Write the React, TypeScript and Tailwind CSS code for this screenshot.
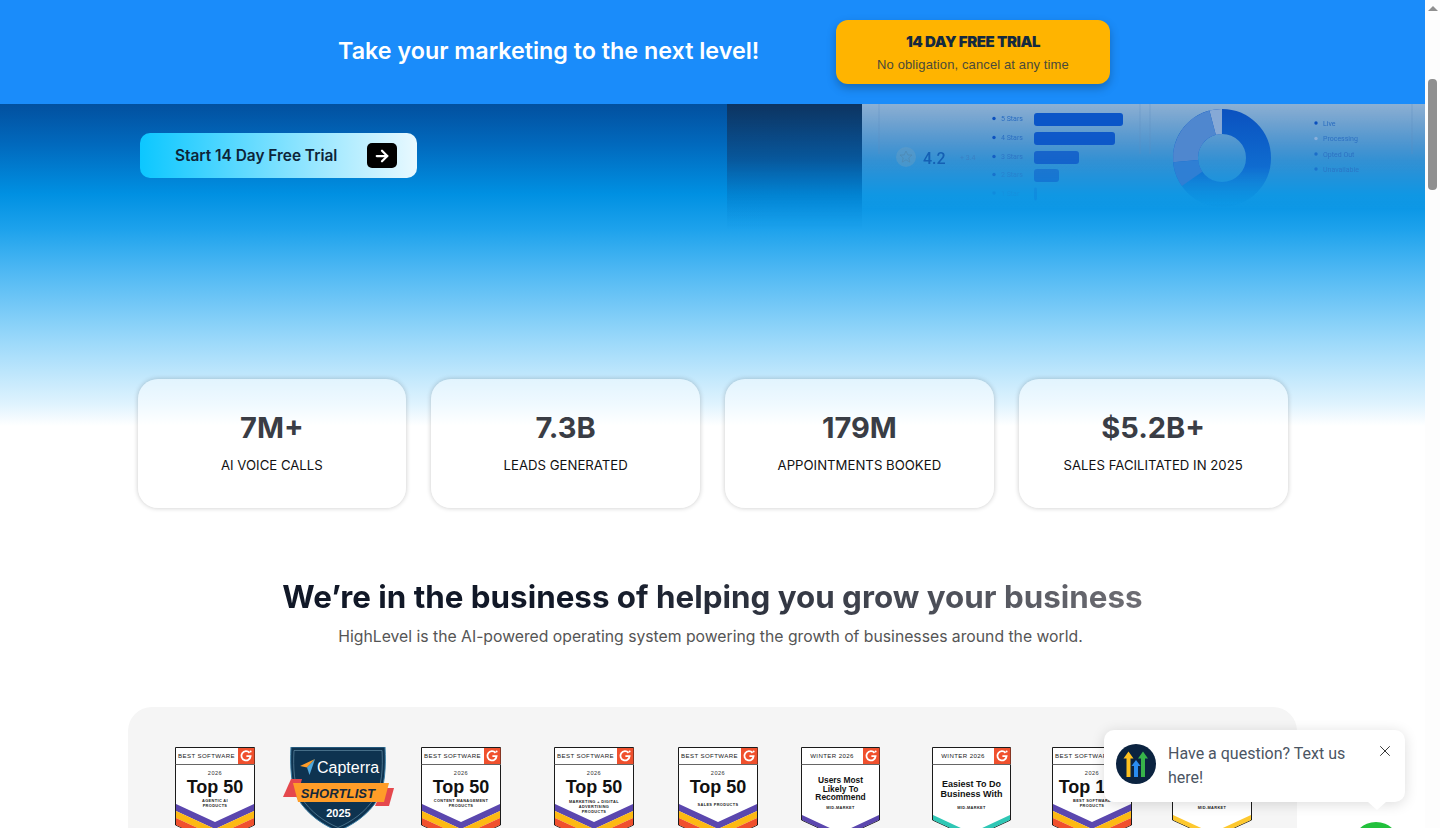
import React from "react";
import { ArrowRight, X } from "lucide-react";

const SANS = "font-['Inter','Liberation_Sans',sans-serif]";

type BadgeProps = {
  head?: string;
  year?: string;
  title?: string[];
  titleSize?: number;
  titleY?: number;
  titleGap?: number;
  sub: string[];
  subY?: number;
  stripes: string[];
  width?: number;
  start?: number;
  thick?: number;
};

function G2Badge({ head, year, title = [], titleSize = 18, titleY = 46, titleGap = 8.7, sub, subY, stripes, width = 80, start = 57, thick = 7 }: BadgeProps) {
  const w = width;
  const c = w / 2;
  const headW = w - 17;
  const drop = 18;
  const fs = "'Liberation Sans', Arial, sans-serif";
  const end = start + stripes.length * thick;
  return (
    <svg width={w} height={81} viewBox={`0 0 ${w} 81`} className="block shrink-0">
      <path d={`M.5.5H${w - 0.5}V${end}L${c} ${end + drop}L.5 ${end}Z`} fill="#fff" stroke="#1b1b1b" />
      {stripes.map((color, i) => (
        <path
          key={color + i}
          d={`M1 ${start + i * thick}L${c} ${start + drop + i * thick}L${w - 1} ${start + i * thick}V${start + (i + 1) * thick}L${c} ${start + drop + (i + 1) * thick}L1 ${start + (i + 1) * thick}Z`}
          fill={color}
        />
      ))}
      <path d={`M.5 17.5H${w}`} stroke="#666" />
      <rect x={headW} y={1} width={16.5} height={16} fill="#f0502d" />
      <path d={`M${headW + 11.5} 5.8A4.6 4.6 0 1 0 ${headW + 12.6} 9.2H${headW + 8.4}`} fill="none" stroke="#fff" strokeWidth={1.8} />
      <circle cx={headW + 12.6} cy={4.6} r={1} fill="#fff" />
      {head && <text x={headW / 2} y={11.4} fontSize={6.1} letterSpacing={0.4} fontWeight={500} fill="#222" textAnchor="middle" fontFamily={fs}>{head}</text>}
      {year && <text x={c} y={27.5} fontSize={5.6} letterSpacing={0.5} fill="#333" textAnchor="middle" fontFamily={fs}>{year}</text>}
      {title.map((t, i) => (
        <text key={t} x={c} y={titleY + i * titleGap} fontSize={titleSize} fontWeight={700} fill="#111" textAnchor="middle" fontFamily={fs}>{t}</text>
      ))}
      {sub.map((t, i) => (
        <text key={t} x={c} y={(subY ?? 56) + i * 5} fontSize={3.9} fontWeight={700} letterSpacing={0.35} fill="#222" textAnchor="middle" fontFamily={fs}>{t}</text>
      ))}
    </svg>
  );
}

function Capterra() {
  const fs = "'Liberation Sans', Arial, sans-serif";
  return (
    <svg width={111} height={81} viewBox="0 0 111 81" className="block shrink-0">
      <path d="M8 0H102C103 20 102 40 95 52C85 68 70 78 55 84C40 78 25 68 15 52C8 40 7 20 8 0Z" fill="#0e3350" stroke="#3b7ea5" />
      <path d="M11 3.5H99C100 21 99 39 92 50C83 65 68 75 55 80.5C42 75 27 65 18 50C11 39 10 21 11 3.5Z" fill="none" stroke="#6d97ae" strokeWidth={0.6} />
      <path d="M17 19L32 12L24 20.5Z" fill="#ff9d28" />
      <path d="M32 12L24 20.5L26.5 28Z" fill="#51a8dc" />
      <text x={34} y={26} fontSize={16} fontWeight={500} fill="#fff" fontFamily={fs}>Capterra</text>
      <path d="M8 32H19L14 50H0Z" fill="#e5484d" />
      <path d="M100 41H111L106 59H92Z" fill="#e5484d" />
      <path d="M10 36H106L101 55H15Z" fill="#ff9d28" />
      <text x={55} y={50.5} fontSize={13} fontWeight={700} fontStyle="italic" letterSpacing={0.1} fill="#14283a" textAnchor="middle" fontFamily={fs}>SHORTLIST</text>
      <text x={55.5} y={69.5} fontSize={11} fontWeight={700} fill="#fff" textAnchor="middle" fontFamily={fs}>2025</text>
    </svg>
  );
}

function HeroPicture() {
  const fs = "Roboto, sans-serif";
  return (
    <svg width={698} height={125} viewBox="0 0 698 125" className="absolute top-0 right-0 blur-[0.4px]">
      <defs>
        <linearGradient id="fadeDark" x1="0" y1="0" x2="0" y2="1">
          <stop offset="0" stopColor="#0d3460" />
          <stop offset="0.45" stopColor="#0a4f8e" stopOpacity={0.75} />
          <stop offset="1" stopColor="#0089dd" stopOpacity={0} />
        </linearGradient>
        <linearGradient id="fadeLight" x1="0" y1="0" x2="0" y2="1">
          <stop offset="0" stopColor="#ffffff" stopOpacity={0.55} />
          <stop offset="0.45" stopColor="#ffffff" stopOpacity={0.2} />
          <stop offset="0.85" stopColor="#ffffff" stopOpacity={0} />
        </linearGradient>
        <linearGradient id="fadeInk" x1="0" y1="0" x2="0" y2="105" gradientUnits="userSpaceOnUse">
          <stop offset="0" stopColor="#0a4fbe" />
          <stop offset="0.6" stopColor="#0f6cd0" />
          <stop offset="1" stopColor="#0090e0" stopOpacity={0} />
        </linearGradient>
      </defs>
      <rect x={0} y={0} width={135} height={125} fill="url(#fadeDark)" />
      <rect x={135} y={0} width={563} height={125} fill="url(#fadeLight)" />
      <g stroke="#5f8fbf" strokeOpacity={0.4}>
        <path d="M152 0V50" />
        <path d="M413 0V50" />
        <path d="M423 0V50" />
        <path d="M685 0V50" />
      </g>
      <circle cx={179} cy={53} r={10} fill="#6f9fc0" opacity={0.4} />
      <path d="M179 47l1.9 4h4.1l-3.2 2.9 1 4.2-3.8-2.3-3.8 2.3 1-4.2-3.2-2.9h4.1z" fill="none" stroke="#4e88b0" strokeWidth={0.7} />
      <text x={196} y={60} fontSize={16} fontWeight={500} fill="#1460b4" fontFamily={fs}>4.2</text>
      <text x={233} y={56} fontSize={7} fill="#3a80c4" fontFamily={fs}>+ 3.4</text>
      {[
        ["5 Stars", 15.5, 89, 1],
        ["4 Stars", 34.5, 81, 0.95],
        ["3 Stars", 53.5, 45, 0.75],
        ["2 Stars", 71.5, 25, 0.45],
        ["1 Star", 90, 3, 0.15],
      ].map(([label, y, w, op]) => (
        <g key={label as string} opacity={op as number}>
          <circle cx={267} cy={(y as number) - 1} r={1.7} fill="#0a4fbe" />
          <text x={274} y={(y as number) + 1.5} fontSize={7} fill="#2a6cc0" fontFamily={fs}>{label as string}</text>
          <rect x={307} y={(y as number) - 6.5} width={w as number} height={13} rx={3} fill="#0a55c8" />
        </g>
      ))}
      <g fill="none" strokeWidth={25}>
        <circle cx={495} cy={54} r={36.5} stroke="url(#fadeInk)" />
        <path d="M495 17.5A36.5 36.5 0 0 0 485.6 18.7" stroke="#86a9d6" />
        <path d="M485.6 18.7A36.5 36.5 0 0 0 458.6 57.2" stroke="#4f87cf" />
        <path d="M458.6 57.2A36.5 36.5 0 0 0 465.1 74.9" stroke="#2f7fd4" />
      </g>
      {[
        ["Live", 23, "#0a4fbe", 1],
        ["Processing", 38.5, "#8fb2dc", 0.9],
        ["Opted Out", 54, "#1668c8", 0.85],
        ["Unavailable", 69, "#1668c8", 0.7],
      ].map(([label, y, col, op]) => (
        <g key={label as string} opacity={op as number}>
          <circle cx={589} cy={(y as number) - 4} r={1.7} fill={col as string} />
          <text x={596} y={(y as number) - 1.5} fontSize={7} fill="#2a6cc0" fontFamily={fs}>{label as string}</text>
        </g>
      ))}
    </svg>
  );
}

function Stat({ value, label }: { value: string; label: string }) {
  return (
    <div className="flex h-[129px] flex-col items-center rounded-[20px] bg-white/50 pt-[30px] shadow-[0_0_5px_rgba(0,0,0,0.22)]">
      <div className={`${SANS} text-[29px] leading-[38px] font-bold text-[#3a3d45]`}>{value}</div>
      <div className={`${SANS} mt-[8px] text-[13.2px] leading-[20px] text-[#111]`}>{label}</div>
    </div>
  );
}

export default function App() {
  const g2 = ["#5b47ae", "#fdb913", "#f0502d"];
  return (
    <div className="relative flex h-[828px] w-[1440px] overflow-hidden bg-white">
      <main className="w-[1425px] shrink-0">
        <header className="flex h-[104px] items-center bg-[#1a8cfa] pl-[338px]">
          <h2 className={`${SANS} w-[498px] -translate-y-[1px] text-[23.3px] font-semibold text-white`}>Take your marketing to the next level!</h2>
          <div className="flex h-[64px] w-[274px] flex-col items-center justify-center rounded-[12px] bg-[#ffb400] shadow-[0_4px_10px_rgba(0,0,0,0.25)]">
            <div className={`${SANS} -mt-[1px] text-[15px] leading-[22px] font-black tracking-[-0.4px] text-[#14293f]`}>14 DAY FREE TRIAL</div>
            <div className="mt-[4px] font-['Liberation_Sans',sans-serif] text-[13px] leading-[16px] tracking-[0.12px] text-[#4a4a3a]">No obligation, cancel at any time</div>
          </div>
        </header>

        <section className="relative bg-[linear-gradient(180deg,#02509f_0px,#0169bd_40px,#0090e2_90px,#1da2ec_125px,#4cb7f3_165px,#99d8fa_235px,#dff3fe_300px,#ffffff_322px)] pt-[29px]">
          <HeroPicture />
          <div className="relative ml-[140px] flex h-[45px] w-[277px] items-center rounded-[10px] bg-[linear-gradient(90deg,#0cc7ff,#e9f9ff)] pl-[35px]">
            <span className={`${SANS} w-[192px] text-[15.4px] font-semibold text-[#0d2438]`}>Start 14 Day Free Trial</span>
            <span className="flex h-[25px] w-[30px] items-center justify-center rounded-[5px] bg-black">
              <ArrowRight size={18} strokeWidth={3} className="text-white" />
            </span>
          </div>

          <div className="relative mx-auto mt-[201px] grid w-[1150px] grid-cols-4 gap-[25px]">
            <Stat value="7M+" label="AI VOICE CALLS" />
            <Stat value="7.3B" label="LEADS GENERATED" />
            <Stat value="179M" label="APPOINTMENTS BOOKED" />
            <Stat value="$5.2B+" label="SALES FACILITATED IN 2025" />
          </div>
        </section>

        <section className="pt-[65px] text-center">
          <h2 className={`${SANS} mx-auto w-fit bg-[linear-gradient(90deg,#111827_35%,#6e6e74_100%)] bg-clip-text text-[31.35px] leading-[48px] font-bold text-transparent`}>
            We’re in the business of helping you grow your business
          </h2>
          <p className={`${SANS} mt-[4px] -translate-x-[2px] text-[15.74px] leading-[24px] text-[#555]`}>
            HighLevel is the AI-powered operating system powering the growth of businesses around the world.
          </p>
        </section>

        <section className="mx-[128px] mt-[58px] flex h-[300px] items-start rounded-[24px] bg-[#f5f5f5] pl-[47px] pt-[40px]">
          <G2Badge head="BEST SOFTWARE" year="2026" title={["Top 50"]} sub={["AGENTIC AI", "PRODUCTS"]} subY={55} stripes={g2} />
          <div className="ml-[28px]"><Capterra /></div>
          <div className="ml-[27px]"><G2Badge head="BEST SOFTWARE" year="2026" title={["Top 50"]} sub={["CONTENT MANAGEMENT", "PRODUCTS"]} subY={55} stripes={g2} /></div>
          <div className="ml-[53px]"><G2Badge head="BEST SOFTWARE" year="2026" title={["Top 50"]} sub={["MARKETING + DIGITAL", "ADVERTISING", "PRODUCTS"]} subY={56} stripes={g2} /></div>
          <div className="ml-[44px]"><G2Badge head="BEST SOFTWARE" year="2026" title={["Top 50"]} sub={["SALES PRODUCTS"]} subY={59} stripes={g2} /></div>
          <div className="ml-[43px]"><G2Badge head="WINTER 2026" title={["Users Most", "Likely To", "Recommend"]} titleSize={8.4} titleY={36} sub={["MID-MARKET"]} subY={62} stripes={["#5b47ae"]} width={79} start={68} thick={5} /></div>
          <div className="ml-[52px]"><G2Badge head="WINTER 2026" title={["Easiest To Do", "Business With"]} titleSize={9} titleY={40} titleGap={9.7} sub={["MID-MARKET"]} subY={62} stripes={["#2fc7b5"]} width={79} start={68} thick={5} /></div>
          <div className="ml-[41px]"><G2Badge head="BEST SOFTWARE" year="2026" title={["Top 100"]} sub={["BEST SOFTWARE", "PRODUCTS"]} subY={55} stripes={g2} /></div>
          <div className="ml-[40px]"><G2Badge sub={["MID-MARKET"]} subY={62} stripes={["#fdc82f"]} start={68} thick={5} /></div>
        </section>
      </main>

      <aside className="relative h-full w-[15px] bg-[#fdfdfd]">
        <div className="mx-auto mt-[6px] h-0 w-0 border-x-[5px] border-b-[5px] border-x-transparent border-b-[#8f8f8f]" />
        <div className="mx-auto mt-[68px] h-[111px] w-[9px] rounded-[4px] bg-[#8f8f8f]" />
      </aside>

      <div className="absolute left-[1352px] top-[822px] h-[48px] w-[48px] rounded-full bg-[#22c03c]" />
      <div className="absolute left-[1104px] top-[730px] flex h-[72px] w-[301px] items-start rounded-[10px] bg-white pl-[12px] pt-[14px] shadow-[0_2px_14px_rgba(0,0,0,0.14)]">
        <svg width={40} height={40} viewBox="0 0 40 40" className="shrink-0">
          <circle cx={20} cy={20} r={20} fill="#0b2340" />
          <path d="M12.5 7.5L17.5 14.5H14.5V33H10.5V14.5H7.5Z" fill="#fdc01f" />
          <path d="M27 7.5L32 14.5H29V33H25V14.5H22Z" fill="#37b34a" />
          <path d="M20 16L24.5 22H22V33H18V22H15.5Z" fill="#2a8cf0" />
        </svg>
        <p className="-mt-[2px] ml-[12px] w-[200px] font-['Roboto',sans-serif] text-[16px] leading-[24px] text-[#4b5563]">Have a question? Text us here!</p>
        <X size={18} strokeWidth={1.2} className="absolute left-[272px] top-[12px] text-[#222]" />
        <div className="absolute left-[264px] top-[68px] h-[12px] w-[18px] bg-white [clip-path:polygon(0_33%,100%_33%,50%_100%)]" />
      </div>
    </div>
  );
}
